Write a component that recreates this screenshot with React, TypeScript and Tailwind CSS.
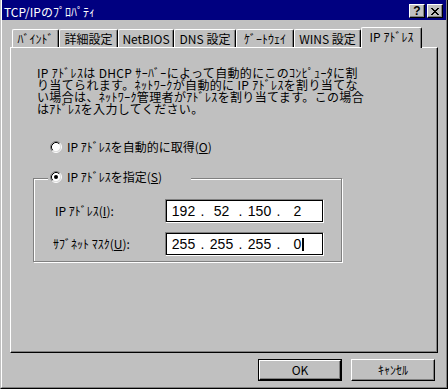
import { Fragment } from 'react'
import type { ReactNode } from 'react'

const TABS = [
  { label: 'ﾊﾞｲﾝﾄﾞ', w: 'w-[47px]' },
  { label: '詳細設定', w: 'w-[59px]' },
  { label: 'NetBIOS', w: 'w-[56px]' },
  { label: 'DNS 設定', w: 'w-[62px]' },
  { label: 'ｹﾞｰﾄｳｪｲ', w: 'w-[58px]' },
  { label: 'WINS 設定', w: 'w-[67px]' },
]

const INFO = [
  'IP ｱﾄﾞﾚｽは DHCP ｻｰﾊﾞｰによって自動的にこのｺﾝﾋﾟｭｰﾀに割',
  'り当てられます。ﾈｯﾄﾜｰｸが自動的に IP ｱﾄﾞﾚｽを割り当てな',
  'い場合は、ﾈｯﾄﾜｰｸ管理者がｱﾄﾞﾚｽを割り当てます。この場合',
  'はｱﾄﾞﾚｽを入力してください。',
]

// win95 style radio, 12x12
function Radio({ checked }: { checked?: boolean }) {
  return (
    <svg width="12" height="12" viewBox="0 0 12 12" className="shrink-0">
      <circle cx="6" cy="6" r="4.5" fill="#ffffff" />
      <path d="M2.11 9.89A5.5 5.5 0 0 1 9.89 2.11" stroke="#808080" fill="none" />
      <path d="M9.89 2.11A5.5 5.5 0 0 1 2.11 9.89" stroke="#ffffff" fill="none" />
      <path d="M2.82 9.18A4.5 4.5 0 0 1 9.18 2.82" stroke="#000000" fill="none" />
      <path d="M9.18 2.82A4.5 4.5 0 0 1 2.82 9.18" stroke="#dfdfdf" fill="none" />
      {checked && <circle cx="6" cy="6" r="2" fill="#000000" />}
    </svg>
  )
}

function CloseGlyph() {
  const rows = ['11000011', '01100110', '00111100', '00011000', '00111100', '01100110', '11000011']
  return (
    <svg width="8" height="7" viewBox="0 0 8 7" shapeRendering="crispEdges">
      {rows.map((r, y) =>
        r.split('').map((c, x) => (c === '1' ? <rect key={`${x}-${y}`} x={x} y={y} width="1" height="1" fill="#000" /> : null)),
      )}
    </svg>
  )
}

function TitleButton({ children }: { children: ReactNode }) {
  return (
    <div className="flex h-[14px] w-[16px] items-center justify-center border border-t-white border-l-white border-r-black border-b-black bg-[#c0c0c0] shadow-[inset_-1px_-1px_#808080]">
      {children}
    </div>
  )
}

function IpField({ parts, caret }: { parts: string[]; caret?: boolean }) {
  return (
    <div className="h-[24px] w-[159px] border border-t-[#808080] border-l-[#808080] border-r-white border-b-white">
      <div className="flex h-full items-center border border-black bg-white font-['Liberation_Sans',sans-serif] text-[14px] leading-none">
        {parts.map((p, i) => (
          <Fragment key={i}>
            {i > 0 && <span className="w-[5px] text-center">.</span>}
            <span className="w-[33px] text-center">
              {p}
              {caret && i === 3 && (
                <span className="-mr-[3px] ml-[1px] inline-block h-[13px] w-[2px] bg-black align-middle" />
              )}
            </span>
          </Fragment>
        ))}
      </div>
    </div>
  )
}

function PushButton({ children, isDefault }: { children: ReactNode; isDefault?: boolean }) {
  const inner = (
    <div className="flex h-full w-full items-center justify-center border border-t-white border-l-white border-r-black border-b-black shadow-[inset_-1px_-1px_#808080]">
      {children}
    </div>
  )
  if (isDefault) {
    return <div className="h-[22px] w-[84px] border border-black">{inner}</div>
  }
  return <div className="h-[22px] w-[84px]">{inner}</div>
}

export default function App() {
  return (
    <div className="h-[389px] w-[448px] border-l border-r border-b border-l-[#c0c0c0] border-r-black border-b-black bg-[#c0c0c0] font-['Noto_Sans_CJK_JP',sans-serif] text-[12px] text-black">
      <div className="h-full border-l border-r border-b border-l-white border-r-[#808080] border-b-[#808080]">
        {/* title bar */}
        <div className="flex h-[20px] items-center bg-[#000080] pl-[2px] pr-[3px]">
          <span className="mt-[3px] whitespace-nowrap leading-none text-white">TCP/IPのﾌﾟﾛﾊﾟﾃｨ</span>
          <div className="ml-auto mt-[2px] flex gap-[2px]">
            <TitleButton>
              <span className="font-['Liberation_Sans',sans-serif] text-[12px] font-bold leading-none">?</span>
            </TitleButton>
            <TitleButton>
              <CloseGlyph />
            </TitleButton>
          </div>
        </div>

        <div className="px-[8px] pt-[7px]">
          {/* tabs */}
          <div className="flex h-[20px] items-end pl-[2px]">
            {TABS.map((t) => (
              <div
                key={t.label}
                className={`${t.w} flex h-[18px] items-center justify-center whitespace-nowrap rounded-t-[2px] border-t border-l border-r border-t-white border-l-white border-r-black pt-[1px] shadow-[inset_-1px_0_#808080]`}
              >
                {t.label}
              </div>
            ))}
            <div className="relative z-10 -mb-[1px] flex h-[21px] w-[61px] items-center justify-center whitespace-nowrap rounded-t-[2px] border-t border-l border-r border-t-white border-l-white border-r-black bg-[#c0c0c0] pb-[2px] shadow-[inset_-1px_0_#808080]">
              IP ｱﾄﾞﾚｽ
            </div>
          </div>

          {/* panel */}
          <div className="h-[306px] w-[428px] border border-t-white border-l-white border-r-black border-b-black pt-[19px] shadow-[inset_-1px_-1px_#808080]">
            <div className="pl-[26px] leading-[12px] tracking-[0.35px]">
              {INFO.map((line) => (
                <div key={line} className="whitespace-nowrap">
                  {line}
                </div>
              ))}
            </div>

            <div className="mt-[26px] flex h-[12px] items-center gap-[5px] pl-[39px]">
              <Radio />
              <span className="whitespace-nowrap">
                IP ｱﾄﾞﾚｽを自動的に取得(<span className="underline">O</span>)
              </span>
            </div>

            <div className="relative ml-[22px] mt-[25px] w-[309px] border border-[#808080] shadow-[inset_1px_1px_0_#ffffff,1px_1px_0_#ffffff]">
              <div className="absolute left-[14px] top-[-9px] flex h-[13px] w-[143px] items-center gap-[5px] bg-[#c0c0c0] pl-[2px]">
                <Radio checked />
                <span className="whitespace-nowrap">
                  IP ｱﾄﾞﾚｽを指定(<span className="underline">S</span>)
                </span>
              </div>
              <div className="flex flex-col gap-[9px] pb-[5px] pt-[20px]">
                <div className="flex items-center">
                  <span className="w-[131px] whitespace-nowrap pl-[21px]">
                    IP ｱﾄﾞﾚｽ(<span className="underline">I</span>):
                  </span>
                  <IpField parts={['192', '52', '150', '2']} />
                </div>
                <div className="flex items-center">
                  <span className="w-[131px] whitespace-nowrap pl-[19px]">
                    ｻﾌﾞﾈｯﾄ ﾏｽｸ(<span className="underline">U</span>):
                  </span>
                  <IpField parts={['255', '255', '255', '0']} caret />
                </div>
              </div>
            </div>
          </div>

          {/* buttons */}
          <div className="mt-[6px] flex w-[428px] justify-end gap-[9px] pr-[3px]">
            <PushButton isDefault>OK</PushButton>
            <PushButton>ｷｬﾝｾﾙ</PushButton>
          </div>
        </div>
      </div>
    </div>
  )
}
